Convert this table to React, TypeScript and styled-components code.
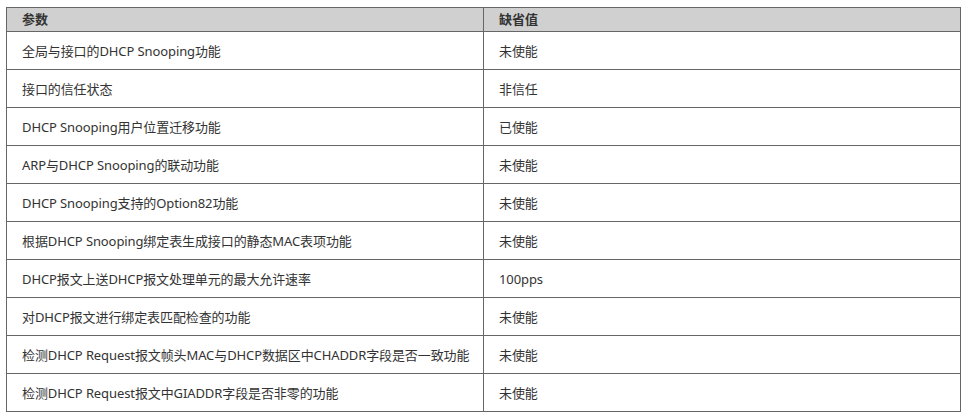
import styled, { createGlobalStyle } from 'styled-components'

const GlobalStyle = createGlobalStyle`
    body {
        margin: 0;
        background: #ffffff;
        font-family: "Noto Sans", "Noto Sans CJK SC", sans-serif;
    }
`

const Page = styled.div`
    padding: 7px 4px 0 6px;
`

const Table = styled.table`
    width: 955px;
    border-collapse: collapse;
    table-layout: fixed;
    font-size: 13px;
    color: #333333;
`

const HeadCell = styled.th<{ $width?: number }>`
    width: ${p => (p.$width ? `${p.$width}px` : 'auto')};
    height: 23px;
    padding: 0 15px;
    text-align: left;
    font-weight: 700;
    background: #d0d0d0;
    border: 1px solid #666666;
    line-height: 1;
`

const Cell = styled.td`
    height: 37px;
    padding: 0 15px;
    border: 1px solid #666666;
    vertical-align: middle;
    white-space: nowrap;
    letter-spacing: -0.1px;
`

const rows: [string, string][] = [
    ['全局与接口的DHCP Snooping功能', '未使能'],
    ['接口的信任状态', '非信任'],
    ['DHCP Snooping用户位置迁移功能', '已使能'],
    ['ARP与DHCP Snooping的联动功能', '未使能'],
    ['DHCP Snooping支持的Option82功能', '未使能'],
    ['根据DHCP Snooping绑定表生成接口的静态MAC表项功能', '未使能'],
    ['DHCP报文上送DHCP报文处理单元的最大允许速率', '100pps'],
    ['对DHCP报文进行绑定表匹配检查的功能', '未使能'],
    ['检测DHCP Request报文帧头MAC与DHCP数据区中CHADDR字段是否一致功能', '未使能'],
    ['检测DHCP Request报文中GIADDR字段是否非零的功能', '未使能'],
]

export default function App() {
    return (
        <Page>
            <GlobalStyle />
            <Table>
                <thead>
                    <tr>
                        <HeadCell $width={446}>参数</HeadCell>
                        <HeadCell>缺省值</HeadCell>
                    </tr>
                </thead>
                <tbody>
                    {rows.map(([param, value]) => (
                        <tr key={param}>
                            <Cell>{param}</Cell>
                            <Cell>{value}</Cell>
                        </tr>
                    ))}
                </tbody>
            </Table>
        </Page>
    )
}
